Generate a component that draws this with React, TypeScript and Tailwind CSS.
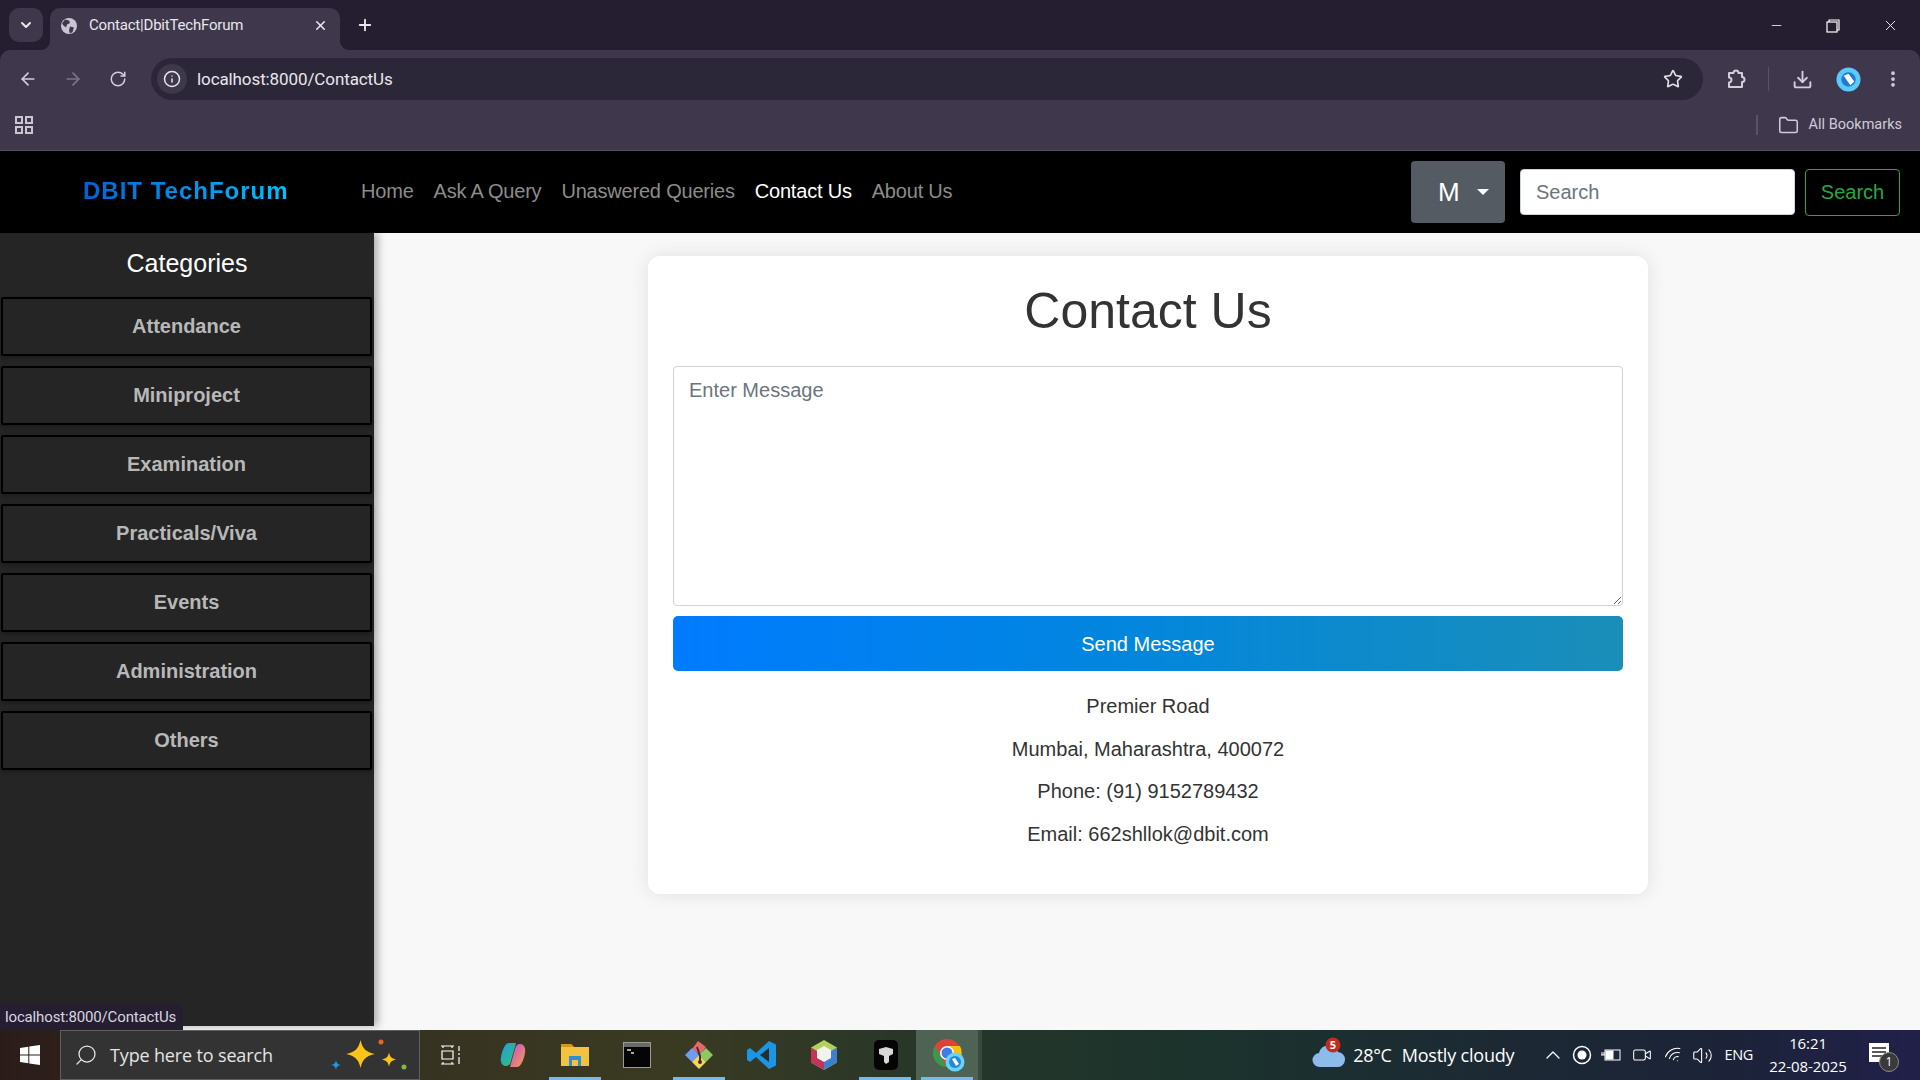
import React from "react";
import { ArrowLeft, ArrowRight, RotateCw, Info, Star, Download, EllipsisVertical, Folder, Minus, X, Plus, ChevronDown, ChevronUp, Search, Volume2, Video, Wifi } from "lucide-react";

const links = ["Home", "Ask A Query", "Unaswered Queries", "Contact Us", "About Us"];
const cats = ["Attendance", "Miniproject", "Examination", "Practicals/Viva", "Events", "Administration", "Others"];

function Globe() {
  return (
    <svg width="18" height="18" viewBox="0 0 18 18">
      <circle cx="9" cy="9" r="8" fill="#c9c5d2" />
      <path d="M5 2.500l4 1 1 2.500-3 1.500-1 3-2.500-2L2 6.500zM10 9.500l4 1-1.500 4.500-2.500 1.500-1-3z" fill="#3f384c" />
    </svg>
  );
}
function ProfileDot({ w, h }: { w: number; h: number }) {
  return (
    <svg width={w} height={h} viewBox="0 0 26 26">
      <circle cx="13" cy="13" r="12.500" fill="#5cc8fb" />
      <circle cx="13" cy="13" r="7.500" fill="#1e7bd0" />
      <path d="M8 9l5-2 6 8-4 4z" fill="#fff" />
    </svg>
  );
}
function Cell({ children, active, under }: { children?: React.ReactNode; active?: boolean; under?: boolean }) {
  return (
    <div className={`relative flex h-[50px] w-[62px] shrink-0 items-center justify-center ${active ? "bg-[#4e6353]" : ""}`}>
      {children}
      {under && <div className="absolute bottom-0 left-[5px] right-[5px] h-[3px] bg-[#76b9ed]" />}
    </div>
  );
}

export default function App() {
  return (
    <div className="relative flex h-screen w-[1920px] flex-col overflow-hidden bg-[#f8f8f8] font-['Liberation_Sans',sans-serif]">
      {/* Tab strip */}
      <div className="flex h-[50px] shrink-0 items-end bg-[#241e30] font-['Roboto',sans-serif] text-[#e8e6ec]">
        <div className="mb-[8px] ml-[9px] flex h-[34px] w-[34px] items-center justify-center rounded-[10px] bg-[#3f384c]">
          <ChevronDown size={16} strokeWidth={3} />
        </div>
        <div className="relative ml-[7px] flex h-[42px] w-[290px] items-center rounded-t-[10px] bg-[#3f384c] pb-[7px] pl-[10px] pr-[12px]">
          <div className="absolute bottom-0 left-[-10px] h-[10px] w-[10px] bg-[radial-gradient(circle_at_0_0,#241e30_10px,#3f384c_10.5px)]" />
          <div className="absolute bottom-0 right-[-10px] h-[10px] w-[10px] bg-[radial-gradient(circle_at_100%_0,#241e30_10px,#3f384c_10.5px)]" />
          <Globe />
          <span className="ml-[11px] flex-1 text-[15px] tracking-[-0.2px]">Contact|DbitTechForum</span>
          <X size={15} strokeWidth={2.5} />
        </div>
        <div className="mb-[10px] ml-[10px] flex h-[30px] w-[30px] items-center justify-center">
          <Plus size={18} strokeWidth={2.5} />
        </div>
        <div className="flex-1" />
        <div className="mb-[16px] flex items-center gap-[42px] pr-[21px] text-white">
          <Minus size={15} strokeWidth={1.25} />
          <svg width="14" height="14" viewBox="0 0 14 14" fill="none" stroke="#fff" strokeWidth="1.2">
            <rect x="1" y="3" width="10" height="10" />
            <path d="M3 3V1h10v10h-2" />
          </svg>
          <X size={17} strokeWidth={1.25} />
        </div>
      </div>

      {/* Toolbar */}
      <div className="shrink-0 bg-[#241e30]">
        <div className="flex h-[58px] items-center rounded-t-[10px] bg-[#3f384c] pl-[18px] pr-[15px] text-[#d2cedb]">
          <ArrowLeft size={20} strokeWidth={2} />
          <ArrowRight size={20} strokeWidth={2} className="ml-[25px] text-[#7d7689]" />
          <RotateCw size={18} strokeWidth={2} className="ml-[26px]" />
          <div className="ml-[24px] flex h-[42px] w-[1552px] items-center rounded-full bg-[#2c2639] pl-[6px] pr-[20px] font-['Roboto',sans-serif]">
            <div className="flex h-[30px] w-[30px] items-center justify-center rounded-full bg-[#3f384c]">
              <Info size={18} strokeWidth={2} className="text-[#e8e6ec]" />
            </div>
            <span className="ml-[10px] flex-1 pt-[2px] text-[17px] tracking-[-0.1px] text-[#e8e6ec]">localhost:8000/ContactUs</span>
            <Star size={20} strokeWidth={2} className="text-[#e0dde6]" />
          </div>
          <svg width="24" height="24" viewBox="0 0 24 24" fill="none" stroke="currentColor" strokeWidth="2" strokeLinejoin="round" className="ml-[21px]">
            <path d="M5 6h4.500a2.500 2.500 0 0 1 5 0H18v4a2.500 2.500 0 0 1 0 5v5H5v-4.500a2.500 2.500 0 0 0 0-5z" />
          </svg>
          <div className="ml-[20px] h-[24px] w-px bg-[#5a5367]" />
          <Download size={21} strokeWidth={2.2} className="ml-[23px]" />
          <div className="ml-[23px]"><ProfileDot w={25} h={25} /></div>
          <EllipsisVertical size={20} strokeWidth={2.500} className="ml-[22px]" />
        </div>
      </div>

      {/* Bookmarks bar */}
      <div className="flex h-[43px] shrink-0 items-center border-b border-[#57505f] bg-[#3f384c] pb-[8px] pl-[15px] pr-[18px] font-['Roboto',sans-serif] text-[#cfcbd8]">
        <svg width="18" height="18" viewBox="0 0 18 18" fill="none" stroke="#c9c5d2" strokeWidth="2">
          <rect x="1" y="1" width="6" height="6" />
          <rect x="11" y="1" width="6" height="6" />
          <rect x="1" y="11" width="6" height="6" />
          <rect x="11" y="11" width="6" height="6" />
        </svg>
        <div className="flex-1" />
        <div className="h-[20px] w-[2px] bg-[#5a5367]" />
        <Folder size={21} strokeWidth={1.75} className="ml-[20px]" />
        <span className="ml-[10px] text-[14.500px]">All Bookmarks</span>
      </div>

      {/* Navbar */}
      <div className="flex h-[82px] shrink-0 items-center bg-black pl-[83px] pr-[20px]">
        <span className="mb-[2px] w-[204px] bg-gradient-to-r from-[#0062d6] to-[#00c0ff] bg-clip-text text-[24px] font-bold tracking-[1px] whitespace-nowrap text-transparent">DBIT TechForum</span>
        <nav className="mb-[2px] ml-[74px] flex items-center gap-[20px] text-[20px] tracking-[-0.2px]">
          {links.map((l) => (
            <span key={l} className={l === "Contact Us" ? "text-white" : "text-[#8c8c8c]"}>{l}</span>
          ))}
        </nav>
        <div className="flex-1" />
        <div className="flex h-[62px] w-[94px] items-center rounded-[4px] bg-[#545b62] pl-[27px] text-[26px] text-white">
          <span>M</span>
          <span className="ml-[17px] h-0 w-0 border-x-[6px] border-t-[6px] border-x-transparent border-t-white" />
        </div>
        <input
          placeholder="Search"
          className="ml-[15px] h-[46px] w-[275px] rounded-[4px] border border-[#ced4da] bg-white px-[15px] text-[20px] text-[#495057] outline-none placeholder:text-[#6c757d]"
        />
        <button className="ml-[10px] h-[47px] w-[95px] rounded-[4px] border border-[#28a745] text-[20px] text-[#28a745]">Search</button>
      </div>

      {/* Body */}
      <div className="flex min-h-0 flex-1">
        <aside className="mb-[4px] w-[374px] shrink-0 bg-[#252525] shadow-[4px_0_8px_rgba(0,0,0,0.3)]">
          <h2 className="mt-[13px] mb-[17px] h-[34px] text-center text-[25px] leading-[34px] text-white">Categories</h2>
          <div className="flex flex-col gap-[10px]">
            {cats.map((c) => (
              <div key={c} className="ml-[1px] mr-[2px] flex h-[59px] items-center justify-center rounded-[2px] border-2 border-black bg-[#252525] pb-[2px] text-[20px] font-bold text-[#b8b8b8] shadow-[0_2px_4px_rgba(0,0,0,0.3)]">
                {c}
              </div>
            ))}
          </div>
        </aside>
        <main className="min-w-0 flex-1">
          <div className="ml-[274px] mt-[23px] h-[638px] w-[1000px] rounded-[12px] bg-white px-[25px] pt-[25px] shadow-[0_0_20px_rgba(0,0,0,0.1)]">
            <h1 className="text-center text-[50px] leading-[60px] text-[#333333]">Contact Us</h1>
            <textarea
              placeholder="Enter Message"
              className="mt-[25px] block h-[240px] w-full rounded-[4px] border border-[#ced4da] bg-white px-[15px] py-[8px] text-[20px] leading-[30px] outline-none placeholder:text-[#6c757d]"
            />
            <button className="mt-[10px] h-[55px] w-full rounded-[5px] bg-gradient-to-r from-[#007bff] to-[#1a8eb8] text-[20px] font-medium text-white">Send Message</button>
            <div className="mt-[20px] flex flex-col gap-[12.500px] text-center text-[20px] leading-[30px] text-[#333333]">
              <p>Premier Road</p>
              <p>Mumbai, Maharashtra, 400072</p>
              <p>Phone: (91) 9152789432</p>
              <p>Email: 662shllok@dbit.com</p>
            </div>
          </div>
        </main>
      </div>

      {/* Status bubble */}
      <div className="absolute bottom-[50px] left-0 z-10 flex h-[26px] w-[183px] items-center rounded-tr-[6px] bg-[#241e30] pl-[5px] font-['Roboto',sans-serif] text-[15px] tracking-[-0.15px] text-[#d8d5e0]">
        localhost:8000/ContactUs
      </div>

      {/* Taskbar */}
      <div className="flex h-[50px] shrink-0 items-center bg-[linear-gradient(90deg,#2b1c1a_0%,#34301f_15%,#3a3a22_35%,#25362a_50%,#1b332c_62%,#1c2b33_75%,#1c2338_90%,#21204a_100%)] font-['Open_Sans',sans-serif] text-white">
        <div className="flex h-[50px] w-[60px] shrink-0 items-center justify-center">
          <svg width="20" height="20" viewBox="0 0 20 20" fill="#fff">
            <path d="M0 3l8.300-1.200v7.800H0zM9.300 1.600L20 0v9.600H9.300zM0 10.500h8.300v7.800L0 17zM9.300 10.500H20V20L9.300 18.500z" />
          </svg>
        </div>
        <div className="flex h-[50px] w-[360px] shrink-0 items-center border border-[#5f5f5f] bg-[#333333] pl-[13px]">
          <Search size={24} strokeWidth={1.25} className="-scale-x-100 text-[#e8e8e8]" />
          <span className="ml-[12px] text-[18px] tracking-[-0.15px] text-[#e4e4e4]">Type here to search</span>
          <svg width="80" height="46" viewBox="0 0 80 46" className="ml-auto mr-[8px]">
            <path d="M29.500 8c2 9 5.500 12 14.500 14-9 2-12.500 5-14.500 14-2-9-5.500-12-14.500-14 9-2 12.500-5 14.500-14z" fill="#fcc419" />
            <path d="M58 20.500c1 4.500 2.500 6 7 7-4.500 1-6 2.500-7 7-1-4.500-2.500-6-7-7 4.500-1 6-2.500 7-7z" fill="#fcc419" />
            <path d="M5 28c.7 3.500 1.500 4.300 5 5-3.500.7-4.300 1.500-5 5-.7-3.500-1.500-4.300-5-5 3.500-.7 4.300-1.500 5-5z" fill="#1c9ce8" />
            <circle cx="50" cy="10" r="2.500" fill="#e8642a" />
            <circle cx="73" cy="35" r="2.500" fill="#7fba3c" />
          </svg>
        </div>
        <Cell>
          <svg width="22" height="22" viewBox="0 0 22 22" fill="none" stroke="#fff" strokeWidth="1.2">
            <path d="M1 2h13M1 20h13M3 2v2M12 2v2M3 20v-2M12 20v-2M2 7h11v8H2zM19 2v5M19 9v2M19 13v7" />
          </svg>
        </Cell>
        <Cell>
          <svg width="30" height="30" viewBox="0 0 30 30">
            <defs>
              <linearGradient id="cp1" x1="0" y1="0" x2="1" y2="1"><stop offset="0" stopColor="#1f9be8" /><stop offset="1" stopColor="#35c46a" /></linearGradient>
              <linearGradient id="cp2" x1="0" y1="0" x2="1" y2="1"><stop offset="0" stopColor="#c44be0" /><stop offset="1" stopColor="#f5a142" /></linearGradient>
            </defs>
            <path d="M11 3h7l-5 18c-.6 3-2 5-5 5-4 0-6-4-5-9 1-6 4-14 8-14z" fill="url(#cp1)" />
            <path d="M19 27h-7l5-18c.6-3 2-5 5-5 4 0 6 4 5 9-1 6-4 14-8 14z" fill="url(#cp2)" />
          </svg>
        </Cell>
        <Cell under>
          <svg width="28" height="26" viewBox="0 0 28 26">
            <path d="M0 2h10l3 3h15v19H0z" fill="#f3c33f" />
            <path d="M0 2h10l3 3H0z" fill="#cf9a1e" />
            <path d="M8 14h12v10h-3v-6h-6v6H8z" fill="#2d8fd5" />
          </svg>
        </Cell>
        <Cell>
          <svg width="28" height="26" viewBox="0 0 28 26">
            <rect x="0.500" y="0.500" width="27" height="25" fill="#050505" stroke="#9a9a9a" />
            <rect x="1" y="1" width="26" height="4" fill="#6a6a6a" />
            <path d="M4 8h4M8 11h3" stroke="#ddd" strokeWidth="1.500" />
          </svg>
        </Cell>
        <Cell under>
          <svg width="30" height="30" viewBox="0 0 30 30">
            <path d="M15 15L8 8l7-7 7 7z" fill="#e8686a" transform="rotate(-8 15 8)" />
            <path d="M15 15l7-7 7 7-7 7z" fill="#8dc864" />
            <path d="M15 15l-7 7-7-7 7-7z" fill="#6e9df2" />
            <path d="M15 15l7 7-7 7-7-7z" fill="#f6d75e" />
            <path d="M13 7l3 9v7" stroke="#333" strokeWidth="2" fill="none" />
            <circle cx="16" cy="22" r="2" fill="#333" />
          </svg>
        </Cell>
        <Cell>
          <svg width="30" height="30" viewBox="0 0 30 30" className="ml-[2px]">
            <path d="M22 1l7 3.500v21L22 29 9 17l-6 5-3-2v-10l3-2 6 5z" fill="#1c96e4" />
            <path d="M22 8l-9 7 9 7z" fill="#232f2a" />
          </svg>
        </Cell>
        <Cell>
          <svg width="30" height="32" viewBox="0 0 30 32" className="ml-[2px]">
            <path d="M15 1l13 7.500v15L15 31 2 23.500v-15z" fill="#b4cf5a" />
            <path d="M2 8.500L15 16v15L2 23.500z" fill="#c2345a" />
            <path d="M28 8.500L15 16v15l13-7.500z" fill="#3d80cf" />
            <path d="M15 7l7 4v8l-7 4-7-4v-8z" fill="#f1f3ee" />
          </svg>
        </Cell>
        <Cell under>
          <svg width="24" height="30" viewBox="0 0 24 30" className="ml-[2px]">
            <rect width="24" height="30" rx="5" fill="#050505" />
            <path d="M5 9l7-2 7 2v5l-4 2v6l-3 2-2-2v-6l-5-2z" fill="#d8d8d8" />
          </svg>
        </Cell>
        <Cell active under>
          <svg width="32" height="34" viewBox="0 0 32 34" className="ml-[4px]">
            <circle cx="14" cy="15" r="14" fill="#dc4437" />
            <path d="M2 8l7 13 5 8a14 14 0 0 1-12-21z" fill="#2f9e4f" />
            <path d="M14 8h13a14 14 0 0 1-3 17l-6-9z" fill="#f4c20d" />
            <circle cx="14" cy="15" r="7" fill="#fff" />
            <circle cx="14" cy="15" r="5.500" fill="#3b7de8" />
            <circle cx="22" cy="24" r="9.500" fill="#6fd0fb" />
            <circle cx="22" cy="24" r="6" fill="#1e8ad8" />
            <path d="M19 21l3-1 4 6-3 2z" fill="#fff" />
          </svg>
        </Cell>
        <div className="h-[50px] w-[4px] shrink-0 bg-[#39483f]" />
        <div className="flex-1" />
        <svg width="34" height="34" viewBox="0 0 34 34" className="mb-[4px]">
          <path d="M9 31a7 7 0 0 1-1-14 10 10 0 0 1 19-1 7.500 7.500 0 0 1-1 15z" fill="#8dbbea" />
          <circle cx="22" cy="9" r="7.500" fill="#c42b1c" />
          <text x="22" y="13" textAnchor="middle" fontSize="11" fontWeight="700" fill="#fff">5</text>
        </svg>
        <span className="ml-[8px] text-[18px] tracking-[-0.3px]">28°C</span>
        <span className="ml-[10px] text-[18px] tracking-[-0.2px]">Mostly cloudy</span>
        <ChevronUp size={24} strokeWidth={1.25} className="ml-[27px]" />
        <svg width="20" height="20" viewBox="0 0 20 20" className="ml-[7px]">
          <circle cx="10" cy="10" r="8.500" fill="none" stroke="#fff" strokeWidth="1.500" />
          <circle cx="10" cy="10" r="4.500" fill="#fff" />
        </svg>
        <svg width="20" height="16" viewBox="0 0 20 16" fill="none" stroke="#fff" className="ml-[9px]">
          <rect x="4" y="3" width="15" height="10" />
          <rect x="5" y="4" width="7" height="8" fill="#fff" />
          <path d="M0 8h4M1 5v3M3 5v3" />
        </svg>
        <Video size={20} strokeWidth={1.25} className="ml-[11px]" />
        <Wifi size={20} strokeWidth={1.25} className="ml-[12px] -rotate-[30deg]" />
        <Volume2 size={21} strokeWidth={1.25} className="ml-[8px]" />
        <span className="ml-[11px] text-[14.500px] tracking-[-0.3px]">ENG</span>
        <div className="ml-[15px] flex w-[80px] flex-col items-center text-[15px] leading-[23px] tracking-[-0.1px]">
          <span>16:21</span>
          <span>22-08-2025</span>
        </div>
        <div className="relative ml-[21px] mr-[29px] h-[30px] w-[22px]">
          <svg width="20" height="20" viewBox="0 0 20 20" fill="#fff" className="mt-[3px]">
            <path d="M0 0h20v19H0z" />
            <path d="M3 5h14M3 9h14M3 13h10" stroke="#222" strokeWidth="1.300" />
          </svg>
          <span className="absolute left-[10px] top-[12px] flex h-[20px] w-[20px] items-center justify-center rounded-full border border-[#8a8a8a] bg-[#3a3a3a] text-[12px]">1</span>
        </div>
      </div>
    </div>
  );
}
